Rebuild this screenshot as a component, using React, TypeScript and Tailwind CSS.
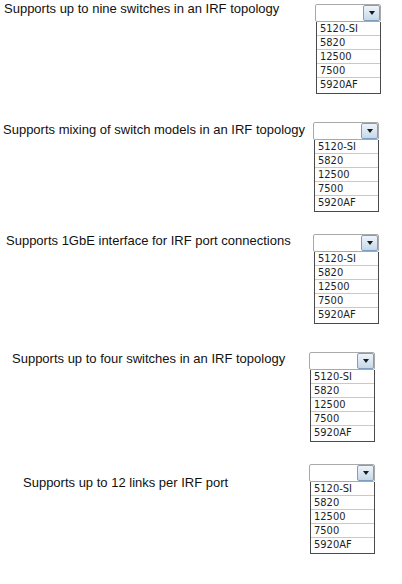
import React from "react";

type Question = {
  label: string;
  textPad: string;
  textTop: string;
  boxLeft: string;
  boxTop: string;
  gap: string;
};

const OPTIONS = ["5120-SI", "5820", "12500", "7500", "5920AF"];

const QUESTIONS: Question[] = [
  {
    label: "Supports up to nine switches in an IRF topology",
    textPad: "pl-[4px]",
    textTop: "pt-[1px]",
    boxLeft: "w-[315px]",
    boxTop: "mt-[4px]",
    gap: "mt-0",
  },
  {
    label: "Supports mixing of switch models in an IRF topology",
    textPad: "pl-[3px]",
    textTop: "pt-[5px]",
    boxLeft: "w-[313px]",
    boxTop: "mt-[5px]",
    gap: "mt-[23px]",
  },
  {
    label: "Supports 1GbE interface for IRF port connections",
    textPad: "pl-[6px]",
    textTop: "pt-[6px]",
    boxLeft: "w-[313px]",
    boxTop: "mt-[7px]",
    gap: "mt-[15px]",
  },
  {
    label: "Supports up to four switches in an IRF topology",
    textPad: "pl-[12px]",
    textTop: "pt-[2px]",
    boxLeft: "w-[309px]",
    boxTop: "mt-[3px]",
    gap: "mt-[25px]",
  },
  {
    label: "Supports up to 12 links per IRF port",
    textPad: "pl-[23px]",
    textTop: "pt-[11px]",
    boxLeft: "w-[309px]",
    boxTop: "mt-0",
    gap: "mt-[22px]",
  },
];

function Combo() {
  return (
    <div className="w-[66px]">
      <div className="flex h-[18px] w-[66px] rounded-[2px] border border-[#a9a9a9] bg-white">
        <div className="flex-1" />
        <div className="flex w-[17px] items-center justify-center rounded-[2px] border border-[#7d9ebf] bg-gradient-to-b from-[#eef4fa] to-[#c5d9ea]">
          <div className="h-0 w-0 border-x-[3.5px] border-t-[4px] border-x-transparent border-t-[#1a1a1a]" />
        </div>
      </div>
      <div className="ml-[1px] w-[65px] border-x border-b border-x-[#4a4a4a] border-b-[#4a4a4a] bg-white">
        {OPTIONS.map((o, i) => (
          <div
            key={o}
            className={
              i < OPTIONS.length - 1
                ? "h-[14px] border-b border-[#c9c9c9] px-[3px] text-[11px] leading-[13px] text-[#1e1e1e]"
                : "h-[15px] px-[3px] text-[11px] leading-[13px] text-[#1e1e1e]"
            }
            style={{ fontFamily: '"DejaVu Sans Condensed", "Liberation Sans", sans-serif' }}
          >
            {o}
          </div>
        ))}
      </div>
    </div>
  );
}

export default function App() {
  return (
    <div
      className="flex h-[584px] w-[402px] flex-col bg-white"
      style={{ fontFamily: '"Liberation Sans", Arial, sans-serif' }}
    >
      {QUESTIONS.map((q) => (
        <div key={q.label} className={`flex items-start ${q.gap}`}>
          <div className={`${q.boxLeft} ${q.textPad} ${q.textTop} text-[13px] leading-[15px] text-[#111]`}>
            {q.label}
          </div>
          <div className={q.boxTop}>
            <Combo />
          </div>
        </div>
      ))}
    </div>
  );
}
